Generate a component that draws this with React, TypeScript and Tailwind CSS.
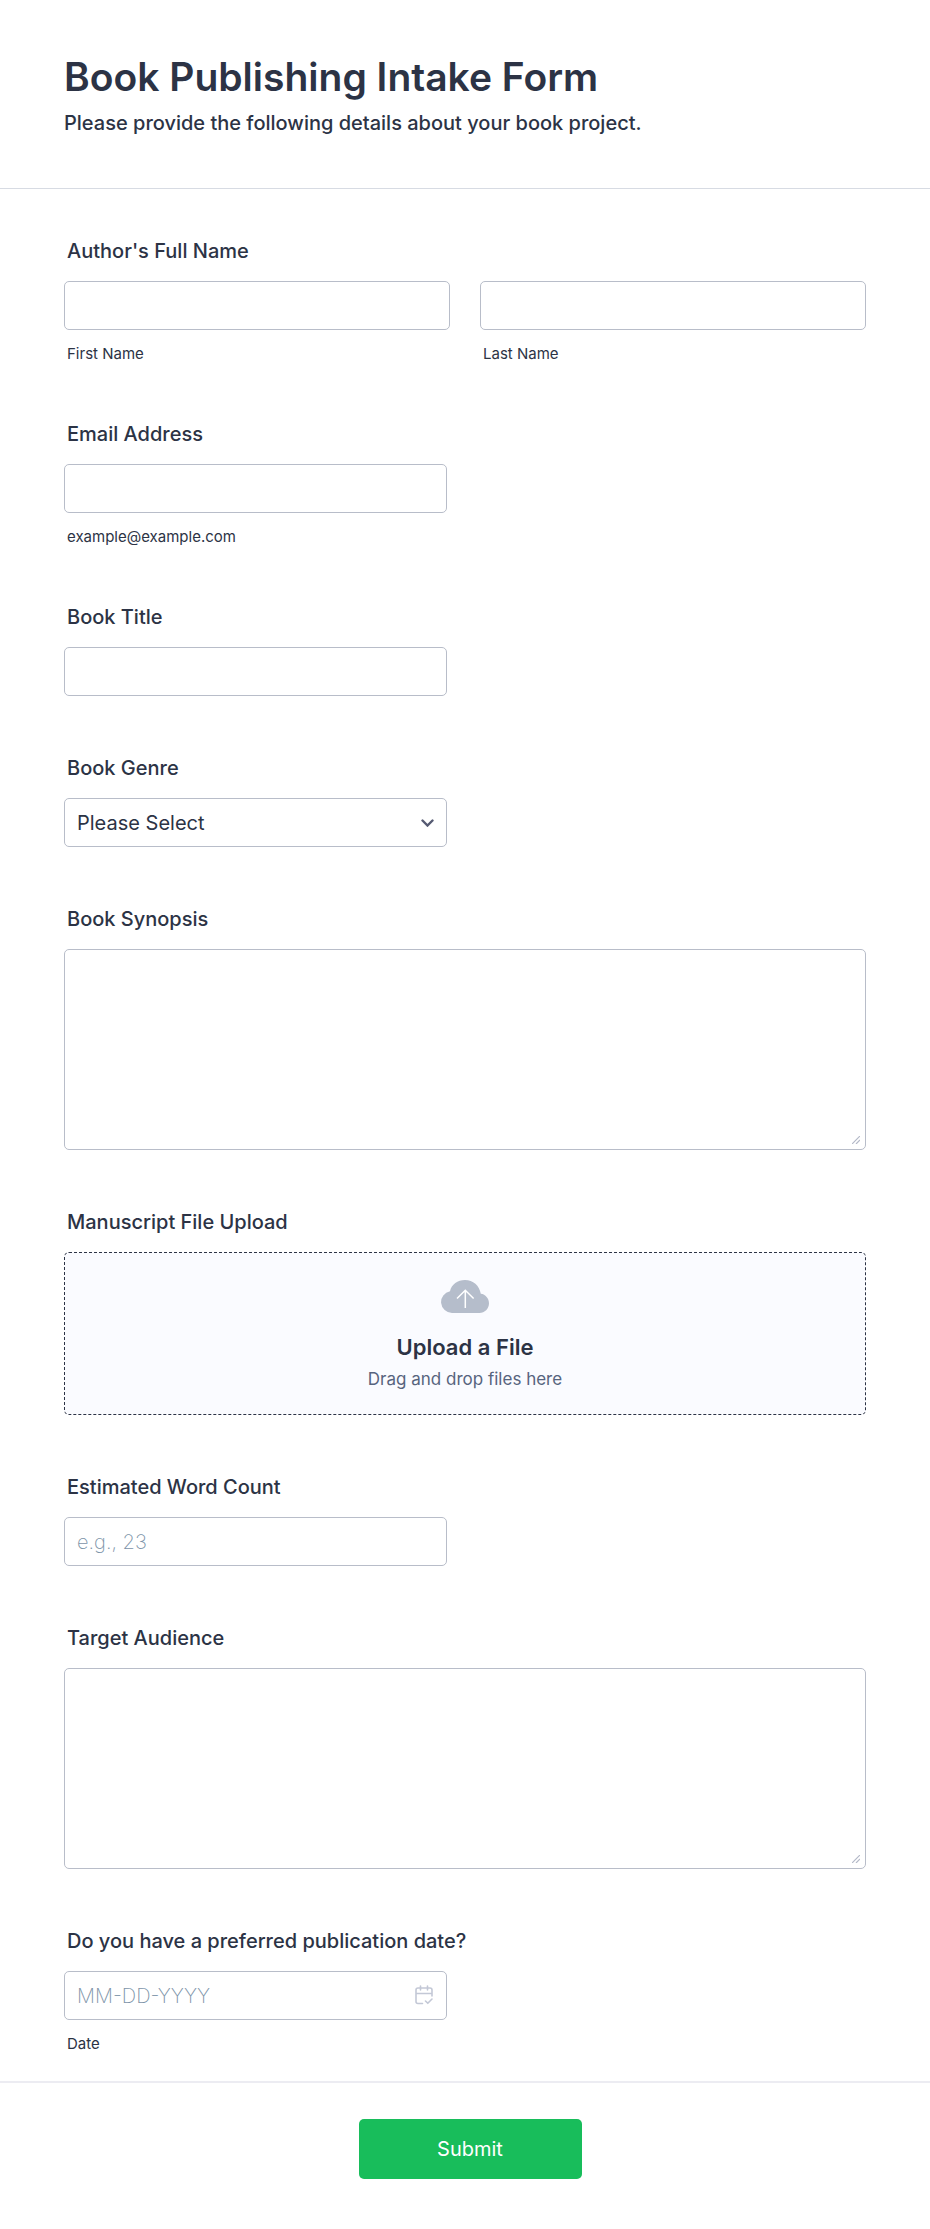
import type { ReactNode } from "react";

const inputClass =
  "block h-[49px] w-full rounded-[5px] border border-[#b8bdc9] bg-white px-3 text-[20px] leading-6 font-light text-[#2c3345] outline-none placeholder:font-extralight placeholder:text-[#7c93a8] focus:border-blue-500";

const labelClass = "mb-[18px] block px-[3px] text-[20px] leading-6 font-medium";

const captionClass = "mt-4 block px-[3px] text-[15px] leading-4";

function Field({
  id,
  label,
  wide,
  caption,
  children,
}: {
  id: string;
  label: string;
  wide?: boolean;
  caption?: string;
  children: ReactNode;
}) {
  return (
    <div>
      <label htmlFor={id} className={labelClass}>
        {label}
      </label>
      <div className={wide ? "w-full" : "w-full max-w-[383px]"}>{children}</div>
      {caption && <span className={captionClass}>{caption}</span>}
    </div>
  );
}

function TextArea({ id }: { id: string }) {
  return (
    <div className="relative">
      <textarea
        id={id}
        name={id}
        className="block h-[201px] w-full resize-none rounded-[5px] border border-[#b8bdc9] bg-white px-3 py-2 text-[20px] font-light outline-none focus:border-blue-500"
      />
      <svg
        className="pointer-events-none absolute right-[6px] bottom-[6px] h-2 w-2"
        viewBox="0 0 8 8"
        stroke="#b4b9c8"
        strokeWidth="1.2"
      >
        <path d="M0 8L8 0M4 8L8 4" />
      </svg>
    </div>
  );
}

function CloudIcon() {
  return (
    <svg width="48" height="33" viewBox="0 0 48 33" fill="none">
      <path
        d="M11 33a11 11 0 0 1-2-21.800C10.500 4.500 16.700 0 24 0c8 0 14.500 5.700 15.800 13.800C44.500 14.300 48 18.500 48 23.300 48 28.700 43.700 33 38.400 33Z"
        fill="#b5bdcb"
      />
      <path d="M24.300 28V10.500M16 18.500l8.300-8.300 8.300 8.300" stroke="#fff" strokeWidth="1.500" />
    </svg>
  );
}

function CalendarIcon() {
  return (
    <svg
      width="18"
      height="20"
      viewBox="0 0 18 20"
      fill="none"
      stroke="#c3c8d6"
      strokeWidth="1.600"
      strokeLinecap="round"
      strokeLinejoin="round"
    >
      <path d="M7.500 18.500H3a2 2 0 0 1-2-2V5a2 2 0 0 1 2-2h12a2 2 0 0 1 2 2v6M1 8.500h16M5.500 1v4M12.500 1v4M10.500 16l2.300 2.300L17 14" />
    </svg>
  );
}

export default function App() {
  return (
    <form
      className="w-full bg-white font-['Inter',sans-serif] text-[#2c3345]"
      onSubmit={(e) => e.preventDefault()}
    >
      <header className="border-b border-[#d7dbe3] px-16 pt-[52px] pb-[52px]">
        <h1 className="text-[39px] leading-[50px] font-semibold">
          Book Publishing Intake Form
        </h1>
        <p className="mt-2 text-[20px] leading-[26px] font-medium">
          Please provide the following details about your book project.
        </p>
      </header>

      <div className="flex flex-col gap-[60px] px-16 pt-[50px] pb-[29px]">
        <fieldset>
          <legend className={labelClass}>Author's Full Name</legend>
          <div className="grid grid-cols-2 gap-[30px]">
            <div>
              <input id="first" name="first" type="text" className={inputClass} />
              <label htmlFor="first" className={captionClass}>
                First Name
              </label>
            </div>
            <div>
              <input id="last" name="last" type="text" className={inputClass} />
              <label htmlFor="last" className={captionClass}>
                Last Name
              </label>
            </div>
          </div>
        </fieldset>

        <Field id="email" label="Email Address" caption="example@example.com">
          <input id="email" name="email" type="email" className={inputClass} />
        </Field>

        <Field id="title" label="Book Title">
          <input id="title" name="title" type="text" className={inputClass} />
        </Field>

        <Field id="genre" label="Book Genre">
          <div className="relative">
            <select
              id="genre"
              name="genre"
              className="block h-[49px] w-full appearance-none rounded-[5px] border border-[#b8bdc9] bg-white px-3 text-[20px] leading-6 outline-none focus:border-blue-500"
            >
              <option>Please Select</option>
              <option>Fiction</option>
              <option>Non-fiction</option>
              <option>Poetry</option>
            </select>
            <svg
              className="pointer-events-none absolute top-[21px] right-[13px]"
              width="13"
              height="8"
              viewBox="0 0 13 8"
              fill="none"
              stroke="#555a72"
              strokeWidth="2.400"
              strokeLinecap="round"
            >
              <path d="M1.500 1.500l5 5 5-5" />
            </svg>
          </div>
        </Field>

        <Field id="synopsis" label="Book Synopsis" wide>
          <TextArea id="synopsis" />
        </Field>

        <Field id="manuscript" label="Manuscript File Upload" wide>
          <label
            htmlFor="manuscript"
            className="relative flex h-[163px] cursor-pointer flex-col items-center rounded-[5px] border border-dashed border-[#2c3345] bg-[#fafbff] pt-[27px]"
          >
            <CloudIcon />
            <span className="mt-5 text-[22px] leading-7 font-semibold">
              Upload a File
            </span>
            <span className="mt-1.5 text-[17px] leading-6 text-[#57647e]">
              Drag and drop files here
            </span>
            <input id="manuscript" name="manuscript" type="file" className="sr-only" />
          </label>
        </Field>

        <Field id="words" label="Estimated Word Count">
          <input
            id="words"
            name="words"
            type="text"
            inputMode="numeric"
            placeholder="e.g., 23"
            className={inputClass}
          />
        </Field>

        <Field id="audience" label="Target Audience" wide>
          <TextArea id="audience" />
        </Field>

        <Field id="date" label="Do you have a preferred publication date?" caption="Date">
          <div className="relative">
            <input
              id="date"
              name="date"
              type="text"
              placeholder="MM-DD-YYYY"
              className={inputClass}
            />
            <button
              type="button"
              aria-label="Choose date"
              className="absolute top-[14px] right-[14px] cursor-pointer"
            >
              <CalendarIcon />
            </button>
          </div>
        </Field>
      </div>

      <footer className="flex justify-center border-t-2 border-[#ececf2] pt-9 pb-[50px] pl-2.5">
        <button
          type="submit"
          className="h-[60px] w-[223px] cursor-pointer rounded-[5px] bg-[#18bd5b] text-[20px] text-white"
        >
          Submit
        </button>
      </footer>
    </form>
  );
}
